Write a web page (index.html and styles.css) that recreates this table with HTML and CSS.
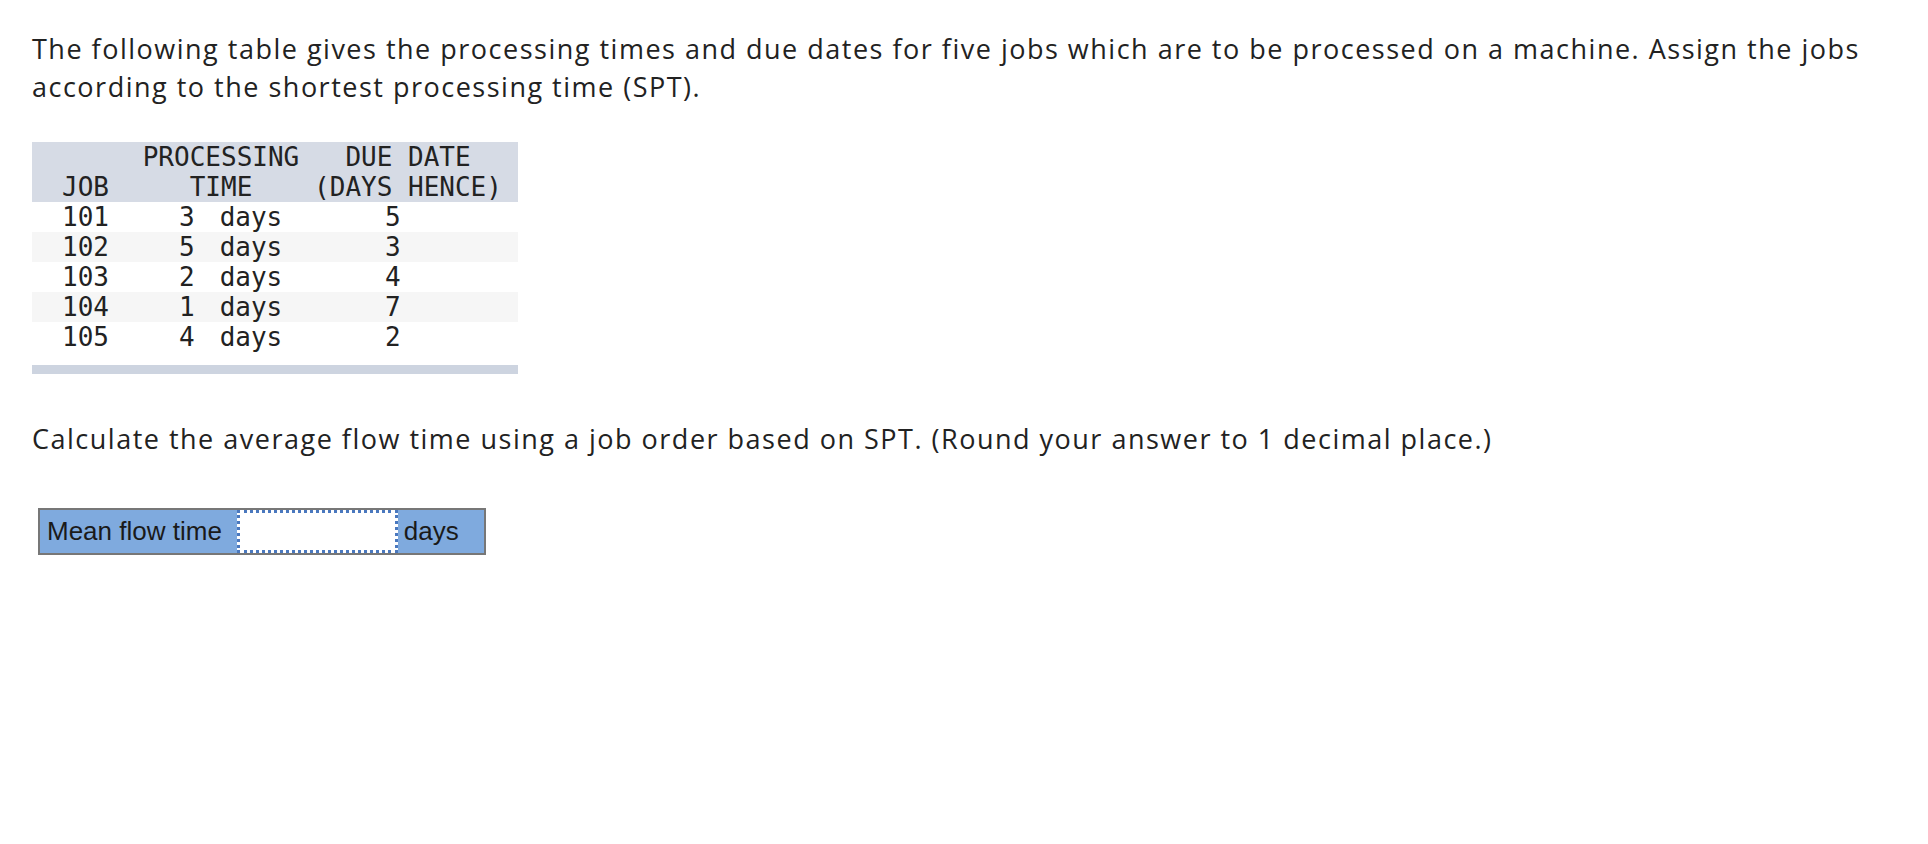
FILE: index.html
```html
<!DOCTYPE html>
<html>
<head>
<meta charset="utf-8">
<link rel="stylesheet" href="styles.css">
</head>
<body>
<div class="page">
  <p class="intro">The following table gives the processing times and due dates for five jobs which are to be processed on a machine. Assign the jobs according to the shortest processing time (SPT).</p>

  <div class="tbl">
    <div class="row head">
      <div class="c1 bottom">JOB</div>
      <div class="c2 center">PROCESSING<br>TIME</div>
      <div class="c3 center">DUE DATE<br>(DAYS HENCE)</div>
    </div>
    <div class="row"><div class="c1">101</div><div class="c2 num">3<span class="unit">days</span></div><div class="c3 due">5</div></div>
    <div class="row alt"><div class="c1">102</div><div class="c2 num">5<span class="unit">days</span></div><div class="c3 due">3</div></div>
    <div class="row"><div class="c1">103</div><div class="c2 num">2<span class="unit">days</span></div><div class="c3 due">4</div></div>
    <div class="row alt"><div class="c1">104</div><div class="c2 num">1<span class="unit">days</span></div><div class="c3 due">7</div></div>
    <div class="row"><div class="c1">105</div><div class="c2 num">4<span class="unit">days</span></div><div class="c3 due">2</div></div>
    <div class="foot"></div>
  </div>

  <p class="question">Calculate the average flow time using a job order based on SPT. (Round your answer to 1 decimal place.)</p>

  <div class="answer">
    <span class="label">Mean flow time</span>
    <span class="field"></span>
    <span class="unitlbl">days</span>
  </div>
</div>
</body>
</html>
```

FILE: styles.css
```css
html, body {
  margin: 0;
  padding: 0;
  background: #ffffff;
}

.page {
  padding: 30px 0 0 25px;
  width: 1880px;
  color: #222222;
  font-family: "Open Sans", "Lato", sans-serif;
}

.intro,
.question {
  margin: 0 0 0 7px;
  font-size: 27px;
  line-height: 38px;
  letter-spacing: 1.5px;
}

.tbl {
  margin-top: 36px;
  margin-left: 7px;
  width: 486px;
  font-family: "DejaVu Sans Mono", monospace;
  font-size: 26px;
  line-height: 30px;
  color: #222222;
}

.row {
  display: grid;
  grid-template-columns: 96px 186px 188px;
  height: 30px;
}

.row.alt {
  background: #f6f6f6;
}

.row.head {
  height: 60px;
  background: #d6dbe5;
}

.c1 {
  padding-left: 30px;
}

.bottom {
  align-self: end;
}

.center {
  text-align: center;
  white-space: nowrap;
}

.num {
  padding-left: 51px;
}

.unit {
  margin-left: 25px;
}

.due {
  padding-left: 71px;
}

.foot {
  margin-top: 13px;
  height: 9px;
  background: #cdd4e0;
}

.question {
  margin-top: 46px;
}

.answer {
  margin-top: 50px;
  margin-left: 13px;
  display: inline-flex;
  align-items: stretch;
  height: 43px;
  border: 2px solid #777777;
  background: #7faade;
  font-family: "Liberation Sans", Arial, sans-serif;
  font-size: 26px;
  color: #1a1a1a;
}

.label {
  display: flex;
  align-items: center;
  padding: 0 15px 0 7px;
}

.field {
  width: 155px;
  background: #ffffff;
  border: 3px dotted #4a78be;
}

.unitlbl {
  display: flex;
  align-items: center;
  padding: 0 25px 0 6px;
}
```
